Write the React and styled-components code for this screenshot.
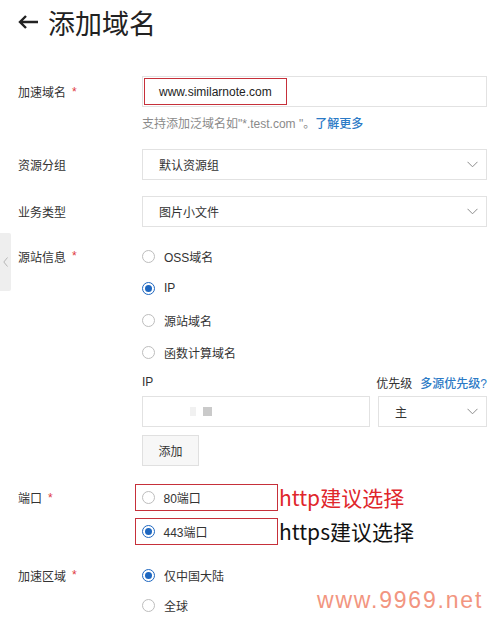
import React from "react";
import styled, { createGlobalStyle } from "styled-components";

const GlobalStyle = createGlobalStyle`
  html, body {
    margin: 0;
    padding: 0;
    background: #fff;
  }
  body {
    font-family: "Liberation Sans", "Noto Sans CJK SC", sans-serif;
    font-size: 12px;
    color: #333;
  }
`;

const Page = styled.div`
  position: relative;
  width: 500px;
  height: 621px;
  overflow: hidden;
  padding-left: 18px;
  box-sizing: border-box;
`;

const Header = styled.div`
  display: flex;
  align-items: center;
  gap: 9px;
  height: 44px;
`;

const Title = styled.h1`
  margin: 0;
  font-family: "Noto Sans CJK SC", sans-serif;
  font-size: 27px;
  font-weight: 400;
  color: #222;
  line-height: 1;
`;

const Form = styled.div`
  display: flex;
  flex-direction: column;
  margin-top: 32px;
`;

const Row = styled.div`
  display: grid;
  grid-template-columns: 124px 345px;
  margin-top: ${(p) => p.$gap || 0}px;
`;

const Label = styled.div`
  display: flex;
  align-items: center;
  height: ${(p) => p.$h || 31}px;
  color: #333;
`;

const Required = styled.span`
  color: #e0393e;
  margin-left: 6px;
`;

const Control = styled.div`
  display: flex;
  flex-direction: column;
`;

const InputBox = styled.div`
  display: flex;
  align-items: center;
  height: 31px;
  padding: 1px;
  box-sizing: border-box;
  border: 1px solid #e2e2e2;
  background: #fff;
`;

const Highlight = styled.span`
  display: flex;
  align-items: center;
  width: 143px;
  height: 27px;
  box-sizing: border-box;
  padding-left: 14px;
  border: 1.5px solid #c6303a;
  color: #222;
`;

const Help = styled.div`
  margin-top: 8px;
  line-height: 18px;
  color: #8a8a8a;
`;

const Link = styled.a`
  color: #2b7ac6;
  font-weight: 500;
  text-decoration: none;
`;

const Select = styled.div`
  display: flex;
  align-items: center;
  justify-content: space-between;
  height: 31px;
  padding: 0 8px 0 16px;
  box-sizing: border-box;
  border: 1px solid #e2e2e2;
  color: #333;
`;

const RadioList = styled.div`
  display: flex;
  flex-direction: column;
`;

const RadioItem = styled.label`
  display: flex;
  align-items: center;
  gap: 9px;
  height: ${(p) => p.$h || 32}px;
  color: #333;
`;

const Circle = styled.span`
  position: relative;
  width: 13px;
  height: 13px;
  box-sizing: border-box;
  border-radius: 50%;
  border: 1px solid ${(p) => (p.$on ? "#1e67c0" : "#bdbdbd")};
  background: #fff;
  flex-shrink: 0;
  &::after {
    content: "";
    display: ${(p) => (p.$on ? "block" : "none")};
    position: absolute;
    left: 2px;
    top: 2px;
    width: 7px;
    height: 7px;
    border-radius: 50%;
    background: #1e67c0;
  }
`;

const SubHeader = styled.div`
  display: flex;
  justify-content: space-between;
  align-items: center;
  margin-top: 6px;
  height: 16px;
  color: #333;
`;

const Priority = styled.div`
  display: flex;
  gap: 8px;
  white-space: nowrap;
`;

const IpRow = styled.div`
  display: grid;
  grid-template-columns: 228px 109px;
  gap: 8px;
  margin-top: 6px;
`;

const IpInput = styled.div`
  display: flex;
  align-items: center;
  gap: 7px;
  height: 31px;
  padding-left: 47px;
  box-sizing: border-box;
  border: 1px solid #e2e2e2;
`;

const Blur = styled.span`
  width: ${(p) => p.$w}px;
  height: 9px;
  background: ${(p) => p.$c};
`;

const Button = styled.button`
  margin-top: 8px;
  width: 57px;
  height: 31px;
  border: 1px solid #e0e0e0;
  background: #f7f7f7;
  font-family: inherit;
  font-size: 12px;
  color: #333;
  padding: 0;
`;

const PortList = styled.div`
  display: flex;
  flex-direction: column;
  gap: 7px;
  margin-left: -7px;
`;

const PortItem = styled.div`
  display: flex;
  align-items: center;
`;

const PortBox = styled.label`
  display: flex;
  align-items: center;
  gap: 9px;
  width: 143px;
  height: 27px;
  box-sizing: border-box;
  padding-left: 5.5px;
  border: 1.5px solid #c6303a;
  color: #333;
`;

const Note = styled.span`
  font-family: "Noto Sans CJK SC", sans-serif;
  font-size: 21px;
  line-height: 1;
  margin-left: 1px;
  color: ${(p) => (p.$red ? "#e0262b" : "#111")};
`;

const SideTab = styled.div`
  position: absolute;
  left: 0;
  top: 233px;
  width: 11px;
  height: 58px;
  display: flex;
  align-items: center;
  justify-content: center;
  background: #eeeeee;
  border-radius: 0 2px 2px 0;
`;

const Watermark = styled.div`
  position: absolute;
  left: 317px;
  top: 587px;
  font-family: "Liberation Sans", sans-serif;
  font-size: 23px;
  letter-spacing: 1.8px;
  color: #f29580;
`;

const Chevron = () => (
  <svg width="11" height="7" viewBox="0 0 11 7">
    <path d="M0.5 0.8 L5.5 5.8 L10.5 0.8" fill="none" stroke="#8c8c8c" strokeWidth="1" />
  </svg>
);

const Radio = ({ on, h, children }) => (
  <RadioItem $h={h}>
    <Circle $on={on} />
    {children}
  </RadioItem>
);

export default function App() {
  return (
    <>
      <GlobalStyle />
      <Page>
        <Header>
          <svg width="21" height="14" viewBox="0 0 21 14">
            <path d="M20 7 H2 M8 1 L2 7 L8 13" fill="none" stroke="#222" strokeWidth="2.4" />
          </svg>
          <Title>添加域名</Title>
        </Header>

        <Form>
          <Row>
            <Label>
              加速域名<Required>*</Required>
            </Label>
            <Control>
              <InputBox>
                <Highlight>www.similarnote.com</Highlight>
              </InputBox>
              <Help>
                支持添加泛域名如"*.test.com "。<Link>了解更多</Link>
              </Help>
            </Control>
          </Row>

          <Row $gap={16}>
            <Label>资源分组</Label>
            <Select>
              默认资源组
              <Chevron />
            </Select>
          </Row>

          <Row $gap={16}>
            <Label>业务类型</Label>
            <Select>
              图片小文件
              <Chevron />
            </Select>
          </Row>

          <Row $gap={13}>
            <Label $h={32}>
              源站信息<Required>*</Required>
            </Label>
            <Control>
              <RadioList>
                <Radio>OSS域名</Radio>
                <Radio on>IP</Radio>
                <Radio>源站域名</Radio>
                <Radio>函数计算域名</Radio>
              </RadioList>
              <SubHeader>
                <span>IP</span>
                <Priority>
                  <span>优先级</span>
                  <Link>多源优先级?</Link>
                </Priority>
              </SubHeader>
              <IpRow>
                <IpInput>
                  <Blur $w={6} $c="#f1f1f1" />
                  <Blur $w={9} $c="#cacaca" />
                </IpInput>
                <Select>
                  主
                  <Chevron />
                </Select>
              </IpRow>
              <div>
                <Button>添加</Button>
              </div>
            </Control>
          </Row>

          <Row $gap={18}>
            <Label $h={27}>
              端口<Required>*</Required>
            </Label>
            <PortList>
              <PortItem>
                <PortBox>
                  <Circle />
                  80端口
                </PortBox>
                <Note $red>http建议选择</Note>
              </PortItem>
              <PortItem>
                <PortBox>
                  <Circle $on />
                  443端口
                </PortBox>
                <Note>https建议选择</Note>
              </PortItem>
            </PortList>
          </Row>

          <Row $gap={15}>
            <Label $h={30}>
              加速区域<Required>*</Required>
            </Label>
            <RadioList>
              <Radio on h={30}>仅中国大陆</Radio>
              <Radio h={30}>全球</Radio>
            </RadioList>
          </Row>
        </Form>

        <SideTab>
          <svg width="5" height="10" viewBox="0 0 5 10">
            <path d="M4.5 0.5 L0.8 5 L4.5 9.5" fill="none" stroke="#b5b5b5" strokeWidth="1" />
          </svg>
        </SideTab>

        <Watermark>www.9969.net</Watermark>
      </Page>
    </>
  );
}
